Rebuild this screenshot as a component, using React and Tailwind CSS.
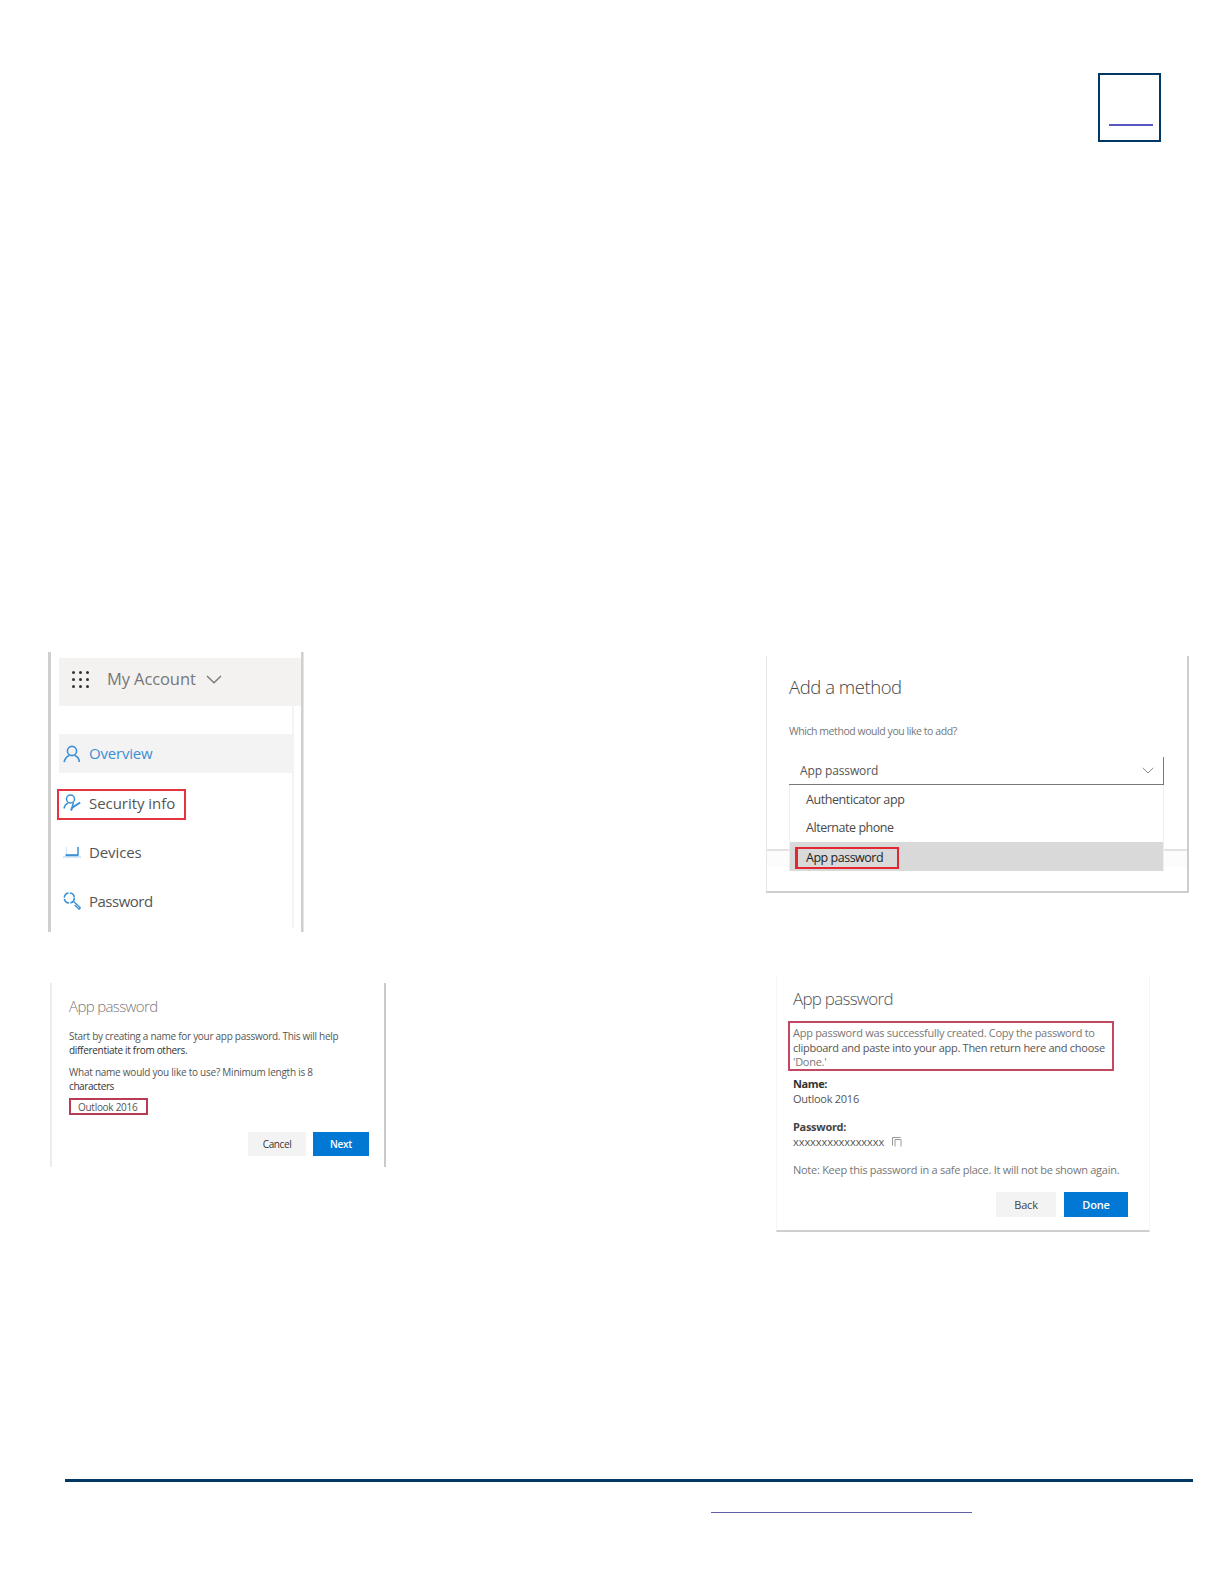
import React from 'react';
import clsx from 'clsx';

const UserIcon = () => (
  <svg viewBox="0 0 18 18" className="w-[18px] h-[18px] shrink-0" fill="none" stroke="#3b8fd6" strokeWidth="1.6">
    <circle cx="9" cy="6" r="4.6" />
    <path d="M1.200 17.200c.6-3.300 2.300-5.600 4.900-6.700M11.900 10.500c2.600 1.100 4.300 3.400 4.300 6.500" />
  </svg>
);

const SecurityIcon = () => (
  <svg viewBox="0 0 18 18" className="w-[18px] h-[18px] shrink-0" fill="none" stroke="#3b8fd6" strokeWidth="1.5">
    <circle cx="7.500" cy="5" r="4" />
    <path d="M1 14.500c.5-2.800 2-4.700 4.300-5.500M10.500 8.500l-1.500 5" />
    <path d="M8 16.500l1.200-2.800 8-5.200" strokeWidth="2" />
  </svg>
);

const LaptopIcon = () => (
  <svg viewBox="0 0 18 18" className="w-[18px] h-[18px] shrink-0" fill="none" stroke="#3b8fd6">
    <path d="M3.500 12V4" strokeWidth="1" opacity="0.25" />
    <path d="M15 4v8" strokeWidth="1.5" />
    <path d="M2.500 12.200h13" strokeWidth="2" />
    <path d="M0 14h18" strokeWidth="1" opacity="0.4" />
  </svg>
);

const KeyIcon = () => (
  <svg viewBox="0 0 18 18" className="w-[18px] h-[18px] shrink-0" fill="none" stroke="#3b8fd6" strokeWidth="1.6">
    <circle cx="6.300" cy="6" r="5" strokeDasharray="6.500 1.350" />
    <path d="M10.300 9.300l7 6.500-1.200 1.400-4.500-4.200" strokeWidth="1.300" />
  </svg>
);

const Chevron = ({ className }) => (
  <svg viewBox="0 0 16 9" className={className} fill="none" stroke="currentColor" strokeWidth="1.3">
    <path d="M1 1l7 6.800L15 1" />
  </svg>
);

const Waffle = () => (
  <div className="grid grid-cols-3 gap-[4px]">
    {Array.from({ length: 9 }).map((_, i) => (
      <span key={i} className="w-[3px] h-[3px] rounded-full bg-[#333]" />
    ))}
  </div>
);

function AccountMenu() {
  const items = [
    { label: 'Devices', icon: LaptopIcon, tracking: 'tracking-[-0.1px]' },
    { label: 'Password', icon: KeyIcon, tracking: 'tracking-[-0.5px]' },
  ];

  return (
    <nav className="w-[255px] h-[280px] border-l-[3px] border-r-[2px] border-[#cfcfcf] pt-[6px] text-[15px] text-[#555] shadow-[1px_0_0_#e4e4e4]">
      <div className="ml-[8px] h-[48px] bg-[#f3f2f1] flex items-center pl-[13px] pb-[5px]">
        <Waffle />
        <span className="ml-[18px] w-[89px] text-[16.500px] tracking-[-0.1px] text-[#777] whitespace-nowrap">My Account</span>
        <Chevron className="w-[16px] h-[9px] ml-[10px] text-[#777]" />
      </div>
      <div className="ml-[6px] mr-[7px] h-[222px] pt-[28px] border-r-2 border-[#f3f3f3]">
        <div className="ml-[2px] h-[39px] bg-[#f3f3f3] flex items-center pl-[4px] text-[#3b8fd6]">
          <UserIcon />
          <span className="ml-[8px] tracking-[-0.2px]">Overview</span>
        </div>
        <div className="mt-[16px] w-[129px] h-[31px] border-2 border-[#e3343f] flex items-center pl-[4px] pb-[3px]">
          <SecurityIcon />
          <span className="ml-[8px] tracking-[-0.05px]">Security info</span>
        </div>
        {items.map(({ label, icon: Icon, tracking }, idx) => (
          <div key={label} className={clsx('h-[20px] flex items-center pl-[6px]', idx === 0 ? 'mt-[22px]' : 'mt-[29px]')}>
            <Icon />
            <span className={clsx('ml-[8px]', tracking)}>{label}</span>
          </div>
        ))}
      </div>
    </nav>
  );
}

function AddMethod() {
  return (
    <section className="relative mt-[4px] w-[423px] h-[237px] border-l border-l-[#e6e6e6] border-r-2 border-r-[#cdcdcd] border-b-2 border-b-[#cdcdcd] pl-[22px] pt-[17px] text-[#555]">
      <div className="absolute left-0 right-0 top-[193px] h-[18px] border-t-2 border-[#e2e2e2] bg-[#fcfcfc]" />
      <h2 className="h-[28px] leading-[28px] text-[18.500px] font-light tracking-[-0.450px] text-[#444]">Add a method</h2>
      <p className="mt-[20px] h-[20px] leading-[20px] text-[10.500px] tracking-[-0.440px] text-[#777] whitespace-nowrap">
        Which method would you like to add?
      </p>
      <div className="relative mt-[16px] w-[375px] h-[28px] border-b border-r border-[#777] flex items-center justify-between pl-[11px] pr-[9px] text-[12px] tracking-[-0.120px]">
        App password
        <Chevron className="w-[12px] h-[7px] text-[#888]" />
      </div>
      <div className="relative w-[375px] h-[86px] bg-white border-x border-[#eee] text-[12.500px] text-[#4a4a4a]">
        <div className="h-[29px] leading-[30px] pl-[16px] tracking-[-0.420px]">Authenticator app</div>
        <div className="h-[28px] leading-[28px] pl-[16px] tracking-[-0.460px]">Alternate phone</div>
        <div className="h-[29px] bg-[#d9d9d9] pl-[5px] pt-[5px] text-[#222]">
          <div className="w-[104px] h-[22px] border-2 border-l-[3px] border-[#e3262f] leading-[17px] pl-[8px] tracking-[-0.480px]">App password</div>
        </div>
      </div>
    </section>
  );
}

function NameForm() {
  return (
    <section className="mt-[8px] w-[336px] h-[184px] border-l-2 border-l-[#ececec] border-r-2 border-r-[#cacaca] pl-[17px] pt-[12px] text-[10px] text-[#555] whitespace-nowrap">
      <h2 className="h-[22px] leading-[22px] text-[15px] font-light tracking-[-0.630px] text-[#777]">App password</h2>
      <p className="mt-[12px] h-[14px] leading-[14px] tracking-[-0.280px]">Start by creating a name for your app password. This will help</p>
      <p className="h-[14px] leading-[14px] tracking-[-0.300px] text-[#333]">differentiate it from others.</p>
      <p className="mt-[9px] h-[13px] leading-[13px] tracking-[-0.240px]">What name would you like to use? Minimum length is 8</p>
      <p className="h-[14px] leading-[14px] tracking-[-0.4px] text-[#333]">characters</p>
      <div className="mt-[5px] w-[79px] h-[17px] border-2 border-[#b83a55] leading-[14px] pl-[7px] tracking-[-0.280px]">Outlook 2016</div>
      <div className="mt-[17px] mr-[15px] flex justify-end gap-[7px] text-center leading-[24px]">
        <button className="w-[58px] h-[24px] bg-[#f3f3f3] text-[#333] tracking-[-0.4px]">Cancel</button>
        <button className="w-[56px] h-[24px] bg-[#0078d4] text-white font-semibold tracking-[-0.3px]">Next</button>
      </div>
    </section>
  );
}

function PasswordCreated() {
  return (
    <section className="w-[374px] h-[257px] border-x border-x-[#f5f5f5] border-b-2 border-b-[#cfcfcf] pl-[11px] pt-[11px] text-[11px] text-[#555] whitespace-nowrap">
      <h2 className="ml-[5px] h-[26px] leading-[25px] text-[17px] font-light tracking-[-0.750px] text-[#555]">App password</h2>
      <div className="mt-[9px] w-[326px] h-[50px] border-2 border-[#c54862] pl-[3px] pt-[3px] leading-[14.500px]">
        <p className="tracking-[-0.280px] text-[#777]">App password was successfully created. Copy the password to</p>
        <p className="tracking-[-0.270px]">clipboard and paste into your app. Then return here and choose</p>
        <p className="tracking-[-0.270px] text-[#777]">'Done.'</p>
      </div>
      <div className="pl-[5px] leading-[15px]">
        <p className="mt-[5px] font-bold tracking-[-0.4px] text-[#333]">Name:</p>
        <p className="tracking-[-0.260px]">Outlook 2016</p>
        <p className="mt-[13px] font-bold tracking-[-0.3px] text-[#444]">Password:</p>
        <div className="flex items-center">
          <span className="w-[92px] tracking-[-0.060px]">xxxxxxxxxxxxxxxx</span>
          <svg viewBox="0 0 10 11" className="ml-[7px] w-[10px] h-[11px]" fill="none" stroke="#999">
            <path d="M.5 9.500V1.500h8M3 3.500h6v7M3 3.500v7" />
          </svg>
        </div>
        <p className="mt-[13px] tracking-[-0.265px] text-[#777]">Note: Keep this password in a safe place. It will not be shown again.</p>
      </div>
      <div className="mt-[15px] mr-[21px] flex justify-end gap-[8px] leading-[25px]">
        <button className="w-[60px] h-[25px] bg-[#f3f3f3] text-[#444] tracking-[-0.2px]">Back</button>
        <button className="w-[64px] h-[25px] bg-[#0078d4] text-white font-semibold tracking-[-0.2px]">Done</button>
      </div>
    </section>
  );
}

export default function App() {
  return (
    <div className="w-[1224px] h-[1584px] bg-white overflow-hidden font-['Open_Sans','Noto_Sans',sans-serif]">
      <header className="flex justify-end pt-[73px] pr-[63px]">
        <div className="w-[63px] h-[69px] border-2 border-[#003865] pl-[9px] pt-[49px]">
          <div className="w-[44px] h-[2px] bg-[#5a58c0]" />
        </div>
      </header>

      <main>
        <div className="mt-[510px] h-[280px] pl-[48px] flex items-start gap-[463px]">
          <AccountMenu />
          <AddMethod />
        </div>
        <div className="mt-[43px] h-[257px] pl-[50px] flex items-start gap-[390px]">
          <NameForm />
          <PasswordCreated />
        </div>
      </main>

      <footer className="mt-[247px] ml-[65px] w-[1128px] h-[34px] border-t-[3px] border-[#003865] pt-[30px]">
        <div className="ml-[646px] w-[261px] h-px bg-[#5f5fa5]" />
      </footer>
    </div>
  );
}
